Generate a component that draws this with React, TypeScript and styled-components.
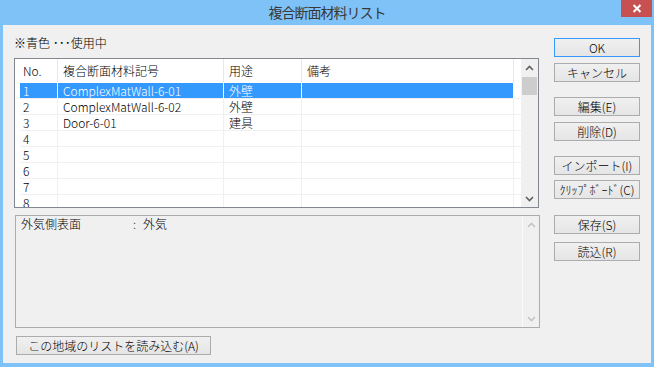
import React from 'react';
import styled, { createGlobalStyle } from 'styled-components';

const GlobalStyle = createGlobalStyle`
  html, body { margin: 0; padding: 0; background: #ffffff; }
  body { font-family: "Noto Sans CJK JP", "Liberation Sans", sans-serif; font-weight: 300; }
  * { box-sizing: border-box; }
`;

const FONT = `"Noto Sans CJK JP", "Liberation Sans", sans-serif`;

const Window = styled.div`
  width: 654px;
  height: 367px;
  background: #7fc2f7;
  display: flex;
  flex-direction: column;
  padding: 0 3px 4px 3px;
  overflow: hidden;
`;

const TitleBar = styled.div`
  position: relative;
  height: 25px;
  flex-shrink: 0;
  display: flex;
  align-items: center;
  justify-content: center;
`;

const TitleText = styled.div`
  font-family: ${FONT};
  font-size: 14px;
  font-weight: 400;
  letter-spacing: -1px;
  line-height: 25px;
  color: #383838;
`;

const CloseButton = styled.div`
  position: absolute;
  top: 0;
  right: -1px;
  width: 31px;
  height: 17px;
  background: #c75050;
  display: flex;
  align-items: center;
  justify-content: center;
`;

const Content = styled.div`
  flex: 1;
  background: #f0f0f0;
  display: flex;
  gap: 14px;
  padding-left: 11px;
`;

const LeftColumn = styled.div`
  width: 526px;
  display: flex;
  flex-direction: column;
`;

const Note = styled.div`
  margin-top: 10px;
  height: 16px;
  font-family: ${FONT};
  font-size: 12px;
  font-weight: 300;
  line-height: 16px;
  color: #000;
  white-space: pre;
`;

const ListBox = styled.div`
  margin-top: 7px;
  width: 525px;
  height: 150px;
  border: 1px solid #828790;
  background: #ffffff;
  display: flex;
  overflow: hidden;
`;

const ListBody = styled.div`
  flex: 1;
  display: flex;
  flex-direction: column;
  overflow: hidden;
`;

const HeaderRow = styled.div`
  height: 24px;
  flex-shrink: 0;
  display: grid;
  grid-template-columns: 43px 166px 78px 212px 1fr;
  background: #ffffff;
`;

const HeaderCell = styled.div<{ $pad: number; $last?: boolean }>`
  font-family: ${FONT};
  font-size: 12px;
  font-weight: 300;
  line-height: 24px;
  color: #000;
  padding-left: ${(p) => p.$pad}px;
  border-right: ${(p) => (p.$last ? 'none' : '1px solid #e3e8ee')};
  white-space: nowrap;
  overflow: hidden;
`;

const Row = styled.div`
  height: 16px;
  flex-shrink: 0;
  display: grid;
  grid-template-columns: 5px 38px 166px 78px 212px 1fr;
`;

const Gutter = styled.div`
  background: #ffffff;
`;

const Cell = styled.div<{ $selected: boolean; $pad: number }>`
  font-family: ${FONT};
  font-size: 12px;
  font-weight: 300;
  line-height: 15px;
  padding-left: ${(p) => p.$pad}px;
  color: ${(p) => (p.$selected ? '#ffffff' : '#000000')};
  background: ${(p) => (p.$selected ? '#3399ff' : '#ffffff')};
  border-right: 1px solid ${(p) => (p.$selected ? '#ffffff' : '#f0f0f0')};
  border-bottom: 1px solid #f0f0f0;
  white-space: nowrap;
  overflow: hidden;
`;

const RowRest = styled.div`
  background: #ffffff;
  border-bottom: 1px solid #f0f0f0;
`;

const ScrollBar = styled.div<{ $disabled?: boolean }>`
  width: 17px;
  flex-shrink: 0;
  background: #f0f0f0;
  display: flex;
  flex-direction: column;
  border-left: ${(p) => (p.$disabled ? '1px solid #fafafa' : 'none')};
`;

const ScrollArrow = styled.div`
  height: 17px;
  flex-shrink: 0;
  display: flex;
  align-items: center;
  justify-content: center;
`;

const ScrollTrack = styled.div`
  flex: 1;
  display: flex;
  flex-direction: column;
  align-items: center;
`;

const ScrollThumb = styled.div`
  width: 15px;
  height: 18px;
  margin-top: 1px;
  background: #cdcdcd;
`;

const DetailPanel = styled.div`
  margin-top: 7px;
  margin-left: 1px;
  width: 525px;
  height: 113px;
  border: 1px solid #acacac;
  background: #f0f0f0;
  display: flex;
`;

const DetailText = styled.div`
  flex: 1;
  padding: 0 5px;
  font-family: ${FONT};
  font-size: 12px;
  font-weight: 300;
  line-height: 16px;
  color: #000;
`;

const DetailLabel = styled.span`
  display: inline-block;
  width: 112px;
`;

const DetailColon = styled.span`
  display: inline-block;
  width: 10px;
`;

const Button = styled.div<{ $top?: number; $width?: number; $default?: boolean }>`
  margin-top: ${(p) => p.$top ?? 0}px;
  width: ${(p) => p.$width ?? 86}px;
  height: 19px;
  flex-shrink: 0;
  border: 1px solid ${(p) => (p.$default ? '#3399ff' : '#acacac')};
  background: linear-gradient(#f0f0f0, #e5e5e5);
  font-family: ${FONT};
  font-size: 12px;
  font-weight: 300;
  line-height: 17px;
  color: #000;
  text-align: center;
  white-space: nowrap;
`;

const BottomButton = styled(Button)`
  margin-left: 2px;
`;

const RightColumn = styled.div`
  width: 86px;
  display: flex;
  flex-direction: column;
`;

const Chevron: React.FC<{ up: boolean; color: string }> = ({ up, color }) => (
  <svg width="9" height="6" viewBox="0 0 9 6">
    <polyline
      points={up ? '1,5 4.5,1.5 8,5' : '1,1 4.5,4.5 8,1'}
      fill="none"
      stroke={color}
      strokeWidth="1.6"
    />
  </svg>
);

const CloseIcon = () => (
  <svg width="10" height="9" viewBox="0 0 10 9">
    <path d="M1.5 1 L8.5 8 M8.5 1 L1.5 8" stroke="#ffffff" strokeWidth="2" fill="none" />
  </svg>
);

type Item = { no: number; name: string; use: string; memo: string };

const items: Item[] = [
  { no: 1, name: 'ComplexMatWall-6-01', use: '外壁', memo: '' },
  { no: 2, name: 'ComplexMatWall-6-02', use: '外壁', memo: '' },
  { no: 3, name: 'Door-6-01', use: '建具', memo: '' },
  { no: 4, name: '', use: '', memo: '' },
  { no: 5, name: '', use: '', memo: '' },
  { no: 6, name: '', use: '', memo: '' },
  { no: 7, name: '', use: '', memo: '' },
  { no: 8, name: '', use: '', memo: '' },
];

const rightButtons: { label: string; top: number; def?: boolean }[] = [
  { label: 'OK', top: 13, def: true },
  { label: 'キャンセル', top: 6 },
  { label: '編集(E)', top: 15 },
  { label: '削除(D)', top: 6 },
  { label: 'インポート(I)', top: 15 },
  { label: 'ｸﾘｯﾌﾟﾎﾞｰﾄﾞ(C)', top: 5 },
  { label: '保存(S)', top: 16 },
  { label: '読込(R)', top: 8 },
];

export default function App() {
  const selected = 1;
  return (
    <>
      <GlobalStyle />
      <Window>
        <TitleBar>
          <TitleText>複合断面材料リスト</TitleText>
          <CloseButton>
            <CloseIcon />
          </CloseButton>
        </TitleBar>
        <Content>
          <LeftColumn>
            <Note>{'※青色 ･･･使用中'}</Note>
            <ListBox>
              <ListBody>
                <HeaderRow>
                  <HeaderCell $pad={8}>No.</HeaderCell>
                  <HeaderCell $pad={5}>複合断面材料記号</HeaderCell>
                  <HeaderCell $pad={5}>用途</HeaderCell>
                  <HeaderCell $pad={5}>備考</HeaderCell>
                  <HeaderCell $pad={0} $last />
                </HeaderRow>
                {items.map((it) => {
                  const sel = it.no === selected;
                  return (
                    <Row key={it.no}>
                      <Gutter />
                      <Cell $selected={sel} $pad={3}>{it.no}</Cell>
                      <Cell $selected={sel} $pad={5}>{it.name}</Cell>
                      <Cell $selected={sel} $pad={5}>{it.use}</Cell>
                      <Cell $selected={sel} $pad={5}>{it.memo}</Cell>
                      <RowRest />
                    </Row>
                  );
                })}
              </ListBody>
              <ScrollBar>
                <ScrollArrow>
                  <Chevron up color="#606060" />
                </ScrollArrow>
                <ScrollTrack>
                  <ScrollThumb />
                </ScrollTrack>
                <ScrollArrow>
                  <Chevron up={false} color="#606060" />
                </ScrollArrow>
              </ScrollBar>
            </ListBox>
            <DetailPanel>
              <DetailText>
                <DetailLabel>外気側表面</DetailLabel>
                <DetailColon>:</DetailColon>
                外気
              </DetailText>
              <ScrollBar $disabled>
                <ScrollArrow>
                  <Chevron up color="#c4c4c4" />
                </ScrollArrow>
                <ScrollTrack />
                <ScrollArrow>
                  <Chevron up={false} color="#c4c4c4" />
                </ScrollArrow>
              </ScrollBar>
            </DetailPanel>
            <BottomButton $top={8} $width={195}>
              この地域のリストを読み込む(A)
            </BottomButton>
          </LeftColumn>
          <RightColumn>
            {rightButtons.map((b) => (
              <Button key={b.label} $top={b.top} $default={b.def}>
                {b.label}
              </Button>
            ))}
          </RightColumn>
        </Content>
      </Window>
    </>
  );
}
